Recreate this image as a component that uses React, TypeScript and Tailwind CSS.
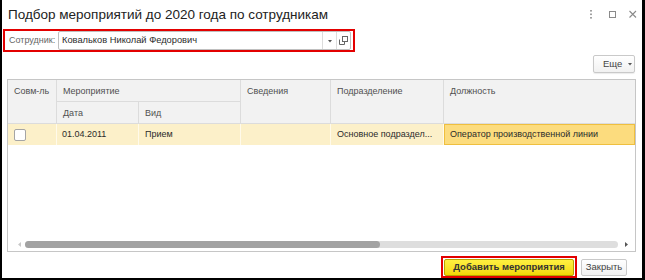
export default function App() {
  const hdr = "bg-[#f2f2f2] border-r border-b border-[#dcdcdc] text-[#505050] pl-[6px] pt-[6px] leading-[11px]";
  const cell = "bg-[#fcf0c9] border-r border-[#fffaea]";
  return (
    <div className="w-[645px] h-[280px] bg-white border-l-2 border-r-[3px] border-b-2 border-black flex flex-col font-['Liberation_Sans',Arial,sans-serif] text-[9px] text-[#2b2b2b] overflow-hidden">
      {/* title bar */}
      <div className="h-[27px] flex items-center pl-[6px]">
        <div className="flex-1 text-[13.5px] text-[#222] leading-none pt-[2px]">Подбор мероприятий до 2020 года по сотрудникам</div>
        <div className="flex items-center">
          <svg width="22" height="14" viewBox="0 0 22 14">
            <rect x="6.2" y="3" width="1.6" height="1.6" fill="#8a8a8a" />
            <rect x="6.2" y="6.5" width="1.6" height="1.6" fill="#8a8a8a" />
            <rect x="6.2" y="10" width="1.6" height="1.6" fill="#8a8a8a" />
          </svg>
          <svg width="20" height="14" viewBox="0 0 20 14">
            <rect x="3.5" y="4.5" width="6" height="6" fill="none" stroke="#8a8a8a" strokeWidth="1" />
          </svg>
          <svg width="16" height="14" viewBox="0 0 16 14">
            <path d="M3.5 4 L10 10.5 M10 4 L3.5 10.5" stroke="#8a8a8a" strokeWidth="1.1" />
          </svg>
        </div>
      </div>

      {/* employee field */}
      <div className="mt-[2px] ml-[1px] w-[352px] h-[23px] border-2 border-[#e30000] flex items-center">
        <div className="w-[53px] pl-[4px] text-[#666] shrink-0 whitespace-nowrap">Сотрудник:</div>
        <div className="w-[293px] h-[19px] border border-[#bfbfbf] rounded-[2px] flex items-stretch bg-white">
          <div className="flex-1 pl-[3px] flex items-center text-[#2b2b2b] text-[9.3px]">Ковальков Николай Федорович</div>
          <div className="w-[14px] border-l border-[#dcdcdc] flex items-center justify-center">
            <svg width="6" height="4" viewBox="0 0 6 4"><path d="M1 1 L5 1 L3 3.5 Z" fill="#555" /></svg>
          </div>
          <div className="w-[14px] border-l border-[#dcdcdc] flex items-center justify-center">
            <svg width="9" height="9" viewBox="0 0 9 9">
              <rect x="3.5" y="0.5" width="5" height="5" fill="none" stroke="#666" strokeWidth="1" />
              <path d="M0.5 3.5 V8.5 H5.5 V6" fill="none" stroke="#666" strokeWidth="1" />
            </svg>
          </div>
        </div>
      </div>

      {/* Еще */}
      <div className="mt-[3px] flex justify-end pr-[7px]">
        <div className="w-[42px] h-[18px] border border-[#c9c9c9] rounded-[2px] bg-gradient-to-b from-white to-[#f1f1f1] shadow-[0_1px_1px_rgba(0,0,0,0.08)] flex items-center pl-[9px] text-[#444] text-[9.5px]">
          <span>Еще</span>
          <svg className="ml-[5px]" width="6" height="4" viewBox="0 0 6 4"><path d="M1 1 L5 1 L3 3.5 Z" fill="#555" /></svg>
        </div>
      </div>

      {/* table */}
      <div className="mt-[6px] ml-[5px] mr-[6px] h-[173px] border border-[#c6c6c6] flex flex-col">
        <div className="grid grid-cols-[49px_82px_102px_90px_113px_1fr] grid-rows-[22px_22px_21px]">
          <div className={`${hdr} row-span-2`}>Совм-ль</div>
          <div className={`${hdr} col-span-2`}>Мероприятие</div>
          <div className={`${hdr} row-span-2`}>Сведения</div>
          <div className={`${hdr} row-span-2`}>Подразделение</div>
          <div className={`${hdr} row-span-2 border-r-0`}>Должность</div>
          <div className={hdr}>Дата</div>
          <div className={hdr}>Вид</div>

          <div className={`${cell} flex items-center pl-[6px]`}>
            <div className="w-[12px] h-[12px] bg-white border border-[#a5a5a5] rounded-[2px]" />
          </div>
          <div className={`${cell} flex items-center pl-[5px]`}>01.04.2011</div>
          <div className={`${cell} flex items-center pl-[6px]`}>Прием</div>
          <div className={cell} />
          <div className={`${cell} flex items-center pl-[6px] whitespace-nowrap overflow-hidden`}>Основное подраздел...</div>
          <div className="bg-[#fcdc7e] border border-[#efbf3e] flex items-center pl-[5px] whitespace-nowrap overflow-hidden">Оператор производственной линии</div>
        </div>
        <div className="flex-1" />
        <div className="h-[9px] mb-[2px] flex items-center">
          <div className="w-[17px] flex justify-end pr-[4px]">
            <svg width="3" height="5" viewBox="0 0 3 5"><path d="M3 0 L0 2.5 L3 5 Z" fill="#c8c8c8" /></svg>
          </div>
          <div className="w-[593px] h-[7px] rounded-full bg-[#dedede]">
            <div className="w-[355px] h-[7px] rounded-full bg-[#a2a2a2]" />
          </div>
          <div className="flex-1 flex justify-center">
            <svg width="3" height="5" viewBox="0 0 3 5"><path d="M0 0 L3 2.5 L0 5 Z" fill="#555" /></svg>
          </div>
        </div>
      </div>

      {/* bottom buttons */}
      <div className="flex-1 flex items-start justify-end pr-[15px] pt-[4px]">
        <div className="w-[136px] h-[22px] border-2 border-[#e30000] flex items-center justify-center">
          <div className="w-[130px] h-[17px] rounded-[2px] border border-[#b7a400] bg-gradient-to-b from-[#fff040] to-[#f3d800] flex items-center justify-center text-[#333] font-bold text-[9.5px]">
            Добавить мероприятия
          </div>
        </div>
        <div className="ml-[4px] mt-[3px] w-[46px] h-[17px] border border-[#c9c9c9] rounded-[2px] bg-gradient-to-b from-white to-[#f1f1f1] flex items-center justify-center text-[#444] text-[9.5px]">
          Закрыть
        </div>
      </div>
    </div>
  );
}
